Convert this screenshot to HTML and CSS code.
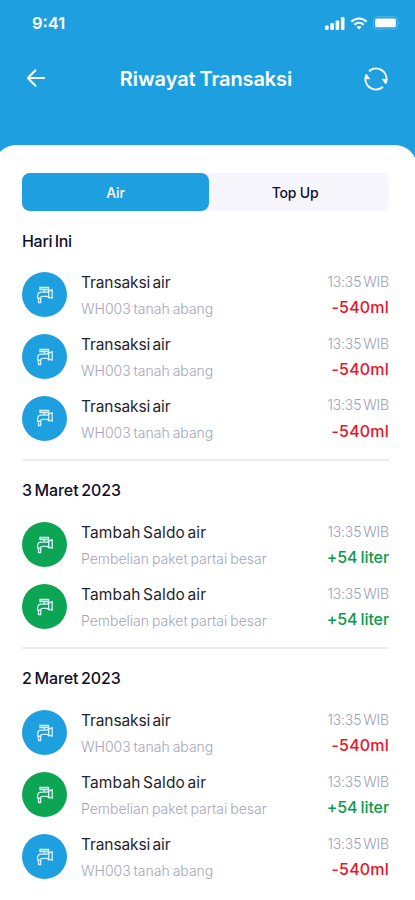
FILE: index.html
```html
<!DOCTYPE html>
<html lang="id">
<head>
<meta charset="utf-8">
<meta name="viewport" content="width=device-width, initial-scale=1">
<title>Riwayat Transaksi</title>
<link rel="stylesheet" href="styles.css">
</head>
<body>
<svg class="defs" aria-hidden="true">
  <symbol id="tap" viewBox="0 0 18 18">
    <path d="M4 1.500h8.600v2H4zM8.300 3.500v3M5.600 6.200h5.600l1.500-1.400v6.900l-1.500-1.400H6.600c-1.400 0-1.900.7-1.900 1.800H1.600V10c0-2.400 1.500-3.800 4-3.800zM12.700 5.200l3.500-1.400v8.400l-3.500-1.200M1.600 12.400h3.100v4.100H2.500v-4.100"/>
  </symbol>
</svg>
<main class="screen">
  <div class="status">
    <span class="clock">9:41</span>
    <div class="indicators">
      <svg class="signal" viewBox="0 0 20 13"><rect x="0" y="8.500" width="3.600" height="4.500" rx="1"/><rect x="5.300" y="6" width="3.600" height="7" rx="1"/><rect x="10.600" y="3.500" width="3.600" height="9.500" rx="1"/><rect x="15.900" y="0" width="3.600" height="13" rx="1"/></svg>
      <svg class="wifi" viewBox="0 0 18 13"><path d="M1.400 4.700c4.400-4.300 10.800-4.300 15.200 0M4.300 7.700c2.700-2.600 6.700-2.600 9.400 0"/><path class="dot" d="M6.500 10c1.500-1.400 3.500-1.400 5 0L9 12.600z"/></svg>
      <svg class="battery" viewBox="0 0 28 14"><rect class="frame" x=".7" y=".7" width="23.600" height="12.400" rx="3"/><rect x="2.200" y="2.500" width="20.600" height="8.800" rx="1.500"/><path class="cap" d="M25.800 5v4q1.500-2 0-4z"/></svg>
    </div>
  </div>
  <header class="bar">
    <svg class="back" viewBox="0 0 20 20"><path d="M18.200 10H1.800M9.500 2.200 1.800 10l7.700 7.800"/></svg>
    <h1>Riwayat Transaksi</h1>
    <svg class="refresh" viewBox="0 0 24 24"><path d="M5.700 3.600A10.500 10.500 0 0 1 21.800 15.800M18.300 20.400A10.500 10.500 0 0 1 2.200 8.200"/><path class="tip" d="M17.600 11.800l5.400.2-2 4.400zM6.400 12.200l-5.400-.2 2-4.400z"/></svg>
  </header>
  <section class="sheet">
    <nav class="tabs"><span class="tab active">Air</span><span class="tab">Top Up</span></nav>

    <section class="group today">
      <h2>Hari Ini</h2>
      <ul>
        <li><span class="badge"><svg><use href="#tap"/></svg></span><div class="info"><b>Transaksi air</b><small class="place">WH003 tanah abang</small></div><div class="side"><time>13:35 WIB</time><em>-540ml</em></div></li>
        <li><span class="badge"><svg><use href="#tap"/></svg></span><div class="info"><b>Transaksi air</b><small class="place">WH003 tanah abang</small></div><div class="side"><time>13:35 WIB</time><em>-540ml</em></div></li>
        <li><span class="badge"><svg><use href="#tap"/></svg></span><div class="info"><b>Transaksi air</b><small class="place">WH003 tanah abang</small></div><div class="side"><time>13:35 WIB</time><em>-540ml</em></div></li>
      </ul>
    </section>

    <section class="group">
      <h2>3 Maret 2023</h2>
      <ul>
        <li class="plus"><span class="badge"><svg><use href="#tap"/></svg></span><div class="info"><b>Tambah Saldo air</b><small>Pembelian paket partai besar</small></div><div class="side"><time>13:35 WIB</time><em>+54 liter</em></div></li>
        <li class="plus"><span class="badge"><svg><use href="#tap"/></svg></span><div class="info"><b>Tambah Saldo air</b><small>Pembelian paket partai besar</small></div><div class="side"><time>13:35 WIB</time><em>+54 liter</em></div></li>
      </ul>
    </section>

    <section class="group">
      <h2>2 Maret 2023</h2>
      <ul>
        <li><span class="badge"><svg><use href="#tap"/></svg></span><div class="info"><b>Transaksi air</b><small class="place">WH003 tanah abang</small></div><div class="side"><time>13:35 WIB</time><em>-540ml</em></div></li>
        <li class="plus"><span class="badge"><svg><use href="#tap"/></svg></span><div class="info"><b>Tambah Saldo air</b><small>Pembelian paket partai besar</small></div><div class="side"><time>13:35 WIB</time><em>+54 liter</em></div></li>
        <li><span class="badge"><svg><use href="#tap"/></svg></span><div class="info"><b>Transaksi air</b><small class="place">WH003 tanah abang</small></div><div class="side"><time>13:35 WIB</time><em>-540ml</em></div></li>
      </ul>
    </section>
  </section>
</main>
</body>
</html>
```
FILE: styles.css
```css
* { box-sizing: border-box; margin: 0; padding: 0; }
body { font-family: Inter, "Liberation Sans", sans-serif; color: #11102a; background: #1d9fe0; }
.defs { display: block; width: 0; height: 0; }
.screen { height: 900px; overflow: hidden; background: #1d9fe0; display: flex; flex-direction: column; }

.status { height: 46px; padding: 0 14px 0 32px; display: flex; justify-content: space-between; align-items: center; color: #fff; flex: none; }
.clock { font-size: 16.500px; font-weight: 600; letter-spacing: 0; }
.indicators { display: flex; align-items: center; gap: 5px; fill: #fff; }
.signal { width: 20px; height: 13px; }
.wifi { width: 18px; height: 13px; }
.wifi path { fill: none; stroke: #fff; stroke-width: 2.2; }
.wifi .dot { fill: #fff; stroke: none; }
.battery { width: 28px; height: 14px; }
.battery .frame { fill: none; stroke: #fff; opacity: .25; }
.battery .cap { opacity: .4; }

.bar { height: 99px; padding: 21px 27px 0 26px; display: flex; justify-content: space-between; align-items: flex-start; color: #fff; flex: none; }
.bar svg { fill: none; stroke: #fff; stroke-width: 2; stroke-linecap: round; stroke-linejoin: round; }
.back { width: 20px; height: 20px; margin-top: 1px; }
.refresh { width: 24px; height: 24px; }
.bar .tip { fill: #fff; stroke: none; }
h1 { font-size: 20px; line-height: 24px; font-weight: 600; letter-spacing: -.1px; word-spacing: -1px; margin-left: 2px; }

.sheet { flex: 1; min-height: 0; margin: 0 -2px 0 -6px; padding: 28px 28px 0; border-radius: 22px 22px 0 0; background: #fff; }
.tabs { height: 38px; display: flex; background: #f6f6fc; border-radius: 8px; }
.tab { flex: 1; display: flex; align-items: center; justify-content: center; font-size: 14px; font-weight: 500; letter-spacing: -.2px; padding-right: 8px; }
.tab.active { flex: 0 0 187px; background: #1d9fe0; color: #fff; border-radius: 8px; padding: 0; }

.group { border-top: 2px solid #e9ebf0; padding-top: 18px; margin-top: 18px; }
.group.today { border: 0; padding-top: 0; margin-top: 19px; }
h2 { font-size: 16px; line-height: 22px; font-weight: 500; letter-spacing: -.1px; word-spacing: -1.5px; margin-bottom: 21.400px; }
.today h2 { letter-spacing: -.3px; margin-bottom: 20.300px; }
ul { list-style: none; display: flex; flex-direction: column; gap: 16.800px; }
li { height: 45px; display: flex; }
.badge { width: 45px; height: 45px; border-radius: 50%; background: #1d9fe0; display: flex; align-items: center; justify-content: center; flex: none; }
.plus .badge { background: #0ca553; }
.badge svg { width: 18px; height: 18px; fill: none; stroke: #d9f1ff; stroke-width: 1.3; }
.info { flex: 1; margin-left: 14px; padding-top: 1px; display: flex; flex-direction: column; white-space: nowrap; }
.info b { font-size: 15.500px; line-height: 20px; font-weight: 400; letter-spacing: -.1px; word-spacing: -2px; color: #25252d; }
.plus .info b { letter-spacing: .15px; }
small { font-size: 14px; line-height: 20px; font-weight: 300; word-spacing: -1px; color: #a5a5bb; margin-top: 6px; }
.side { display: flex; flex-direction: column; align-items: flex-end; white-space: nowrap; }
time { font-size: 14px; line-height: 20px; font-weight: 300; letter-spacing: -.15px; word-spacing: -2px; color: #a0a0b4; margin-top: -.5px; }
em { font-style: normal; font-size: 16px; line-height: 20px; font-weight: 500; letter-spacing: .2px; color: #ec1228; margin-top: 5.500px; }
.plus em { color: #0c9b4d; letter-spacing: -.1px; word-spacing: -1px; }
```
